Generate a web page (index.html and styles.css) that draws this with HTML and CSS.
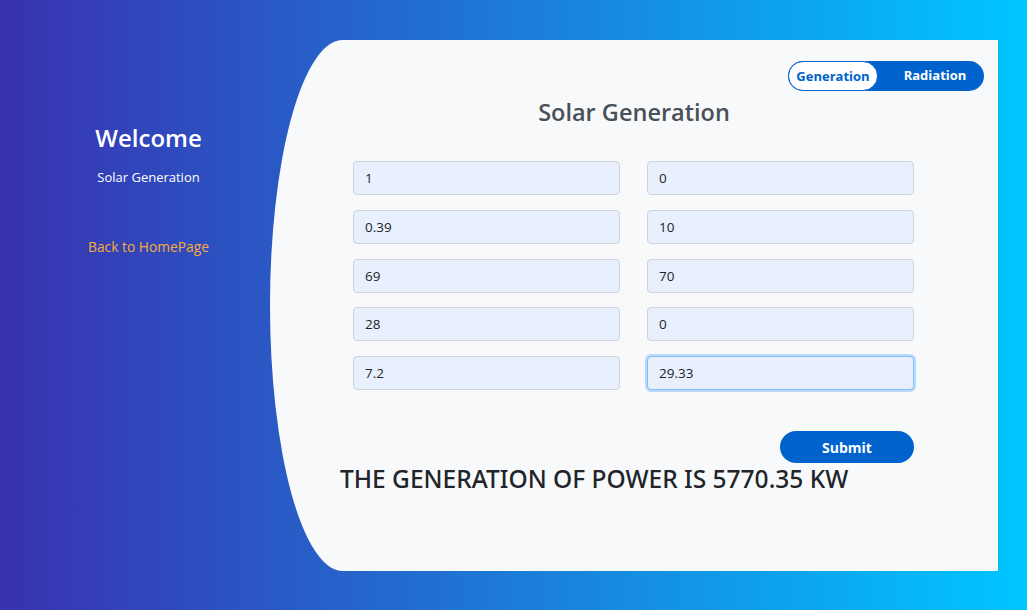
FILE: index.html
```html
<!DOCTYPE html>
<html lang="en">
<head>
<meta charset="utf-8">
<title>Solar Generation</title>
<link rel="stylesheet" href="styles.css">
</head>
<body>
<div class="page">
  <aside class="left">
    <h3 class="welcome">Welcome</h3>
    <p class="sub">Solar Generation</p>
    <a class="back" href="#">Back to HomePage</a>
  </aside>
  <main class="card">
    <div class="tabs-row">
      <div class="tabs">
        <a class="tab active" href="#">Generation</a>
        <a class="tab" href="#">Radiation</a>
      </div>
    </div>
    <h3 class="heading">Solar Generation</h3>
    <form class="form">
      <div class="grid">
        <input class="field" value="1">
        <input class="field" value="0">
        <input class="field" value="0.39">
        <input class="field" value="10">
        <input class="field" value="69">
        <input class="field" value="70">
        <input class="field" value="28">
        <input class="field" value="0">
        <input class="field" value="7.2">
        <input class="field focus" value="29.33">
      </div>
      <div class="submit-row">
        <button type="button" class="submit">Submit</button>
      </div>
    </form>
    <h2 class="result">THE GENERATION OF POWER IS 5770.35 KW</h2>
  </main>
</div>
</body>
</html>
```
FILE: styles.css
```css
* { box-sizing: border-box; }
html, body { margin: 0; padding: 0; }
body {
  font-family: "Open Sans", "Noto Sans", sans-serif;
  color: #212529;
}
.page {
  width: 1027px;
  height: 610px;
  background: linear-gradient(to right, #3931af, #00c6ff);
  display: flex;
  padding: 40px 29px 39px 27px;
}
.left {
  width: 243px;
  flex: none;
  text-align: center;
  color: #fff;
  padding-top: 80px;
  display: flex;
  flex-direction: column;
  align-items: center;
}
.welcome {
  margin: 0;
  font-size: 24px;
  font-weight: 600;
  line-height: 36px;
}
.sub {
  margin: 12px 0 0;
  font-size: 13px;
  line-height: 18px;
}
.back {
  margin-top: 51px;
  color: #f5ac3b;
  text-decoration: none;
  font-size: 13.8px;
  line-height: 20px;
}
.card {
  flex: 1;
  background: #f8f9fa;
  border-top-left-radius: 10% 50%;
  border-bottom-left-radius: 10% 50%;
  padding: 21px 14px 0 0;
  display: flex;
  flex-direction: column;
}
.tabs-row {
  display: flex;
  justify-content: flex-end;
}
.tabs {
  display: flex;
  width: 196px;
  height: 30px;
  background: #0062cc;
  border-radius: 15px;
}
.tab {
  display: flex;
  align-items: center;
  justify-content: center;
  flex: 1;
  color: #fff;
  font-weight: 700;
  font-size: 13px;
  text-decoration: none;
  padding: 0 0 2px 8px;
}
.tab.active {
  flex: none;
  width: 90px;
  background: #fff;
  color: #0062cc;
  border: 1px solid #0062cc;
  border-radius: 15px;
  padding: 0 0 1px;
}
.heading {
  margin: 5px 0 0;
  text-align: center;
  font-size: 23.5px;
  font-weight: 600;
  line-height: 32px;
  color: #495057;
  padding-left: 14px;
}
.form {
  padding: 0 70px 0 83px;
  margin-top: 33px;
}
.grid {
  display: grid;
  grid-template-columns: 1fr 1fr;
  column-gap: 27px;
  row-gap: 14.75px;
}
.field {
  height: 34px;
  width: 100%;
  background: #e8f0fe;
  border: 1px solid #ced4da;
  border-radius: 4px;
  padding: 0 11px;
  font-family: inherit;
  font-size: 13.5px;
  color: #212529;
  outline: none;
}
.field.focus {
  border-color: #80bdff;
  box-shadow: 0 0 0 2px rgba(0, 123, 255, 0.25);
}
.submit-row {
  display: flex;
  justify-content: flex-end;
  margin-top: 41px;
}
.submit {
  width: 134px;
  height: 32px;
  border: none;
  border-radius: 16px;
  background: #0062cc;
  color: #fff;
  font-family: inherit;
  font-weight: 700;
  font-size: 14px;
}
.result {
  margin: 0 0 0 70px;
  font-family: "Noto Sans", "Open Sans", sans-serif;
  font-size: 24.5px;
  font-weight: 500;
  line-height: 32px;
  color: #212529;
}
```
